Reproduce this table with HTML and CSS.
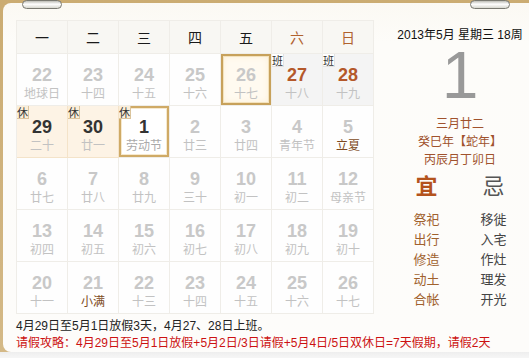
FILE: index.html
```html
<!DOCTYPE html>
<html lang="zh-CN">
<head>
<meta charset="utf-8">
<title>万年历</title>
<link rel="stylesheet" href="styles.css">
</head>
<body>
<div class="frame">
  <span class="ring ring-left"></span>
  <span class="ring ring-right"></span>
  <div class="main">
    <div class="cal">
      <div class="hd">一</div><div class="hd">二</div><div class="hd">三</div><div class="hd">四</div><div class="hd">五</div><div class="hd wk">六</div><div class="hd wk">日</div>

      <div class="day"><b>22</b><i>地球日</i></div>
      <div class="day"><b>23</b><i>十四</i></div>
      <div class="day"><b>24</b><i>十五</i></div>
      <div class="day"><b>25</b><i>十六</i></div>
      <div class="day sel"><b>26</b><i>十七</i></div>
      <div class="day work"><span class="tag">班</span><b>27</b><i>十八</i></div>
      <div class="day work"><span class="tag">班</span><b>28</b><i>十九</i></div>

      <div class="day rest"><span class="tag">休</span><b>29</b><i>二十</i></div>
      <div class="day rest"><span class="tag">休</span><b>30</b><i>廿一</i></div>
      <div class="day today"><span class="tag">休</span><b>1</b><i>劳动节</i></div>
      <div class="day"><b>2</b><i>廿三</i></div>
      <div class="day"><b>3</b><i>廿四</i></div>
      <div class="day"><b>4</b><i>青年节</i></div>
      <div class="day"><b>5</b><i class="term">立夏</i></div>

      <div class="day"><b>6</b><i>廿七</i></div>
      <div class="day"><b>7</b><i>廿八</i></div>
      <div class="day"><b>8</b><i>廿九</i></div>
      <div class="day"><b>9</b><i>三十</i></div>
      <div class="day"><b>10</b><i>初一</i></div>
      <div class="day"><b>11</b><i>初二</i></div>
      <div class="day"><b>12</b><i>母亲节</i></div>

      <div class="day"><b>13</b><i>初四</i></div>
      <div class="day"><b>14</b><i>初五</i></div>
      <div class="day"><b>15</b><i>初六</i></div>
      <div class="day"><b>16</b><i>初七</i></div>
      <div class="day"><b>17</b><i>初八</i></div>
      <div class="day"><b>18</b><i>初九</i></div>
      <div class="day"><b>19</b><i>初十</i></div>

      <div class="day"><b>20</b><i>十一</i></div>
      <div class="day"><b>21</b><i class="term">小满</i></div>
      <div class="day"><b>22</b><i>十三</i></div>
      <div class="day"><b>23</b><i>十四</i></div>
      <div class="day"><b>24</b><i>十五</i></div>
      <div class="day"><b>25</b><i>十六</i></div>
      <div class="day"><b>26</b><i>十七</i></div>
    </div>

    <div class="side">
      <div class="date">2013年5月 星期三 18周</div>
      <div class="big">1</div>
      <div class="lunar">
        <div>三月廿二</div>
        <div>癸巳年【蛇年】</div>
        <div>丙辰月丁卯日</div>
      </div>
      <div class="yj">
        <div class="col yi">
          <div class="title">宜</div>
          <div>祭祀</div><div>出行</div><div>修造</div><div>动土</div><div>合帐</div>
        </div>
        <div class="col ji">
          <div class="title">忌</div>
          <div>移徙</div><div>入宅</div><div>作灶</div><div>理发</div><div>开光</div>
        </div>
      </div>
    </div>
  </div>
  <div class="notes">
    <p>4月29日至5月1日放假3天，4月27、28日上班。</p>
    <p class="red">请假攻略：4月29日至5月1日放假+5月2日/3日请假+5月4日/5日双休日=7天假期，请假2天</p>
  </div>
</div>
</body>
</html>
```

FILE: styles.css
```css
html, body {
  margin: 0;
  padding: 0;
}
body {
  width: 529px;
  height: 358px;
  overflow: hidden;
  background: linear-gradient(to bottom, #cbac72 0, #d4b987 352px, #eeeeee 352px, #f6f6f6 358px);
  font-family: "Liberation Sans", "Noto Sans CJK SC", sans-serif;
  color: #222;
}
.frame {
  position: relative;
  margin: 3px 0 0 3px;
  height: 349px;
  box-sizing: border-box;
  padding: 17px 0 0 13px;
  background: linear-gradient(to bottom, #fbf9f3 0, #fdfcf9 40px, #fdfcfa 100%);
  border-top-left-radius: 8px;
  border-bottom-left-radius: 8px;
}
.ring {
  position: absolute;
  top: -3px;
  width: 40px;
  height: 9px;
  box-sizing: border-box;
  border: 1px solid #7a7a72;
  border-radius: 5px;
  background: linear-gradient(to bottom, #bdbdb5 0, #ffffff 45%, #d8d8d0 100%);
}
.ring-left { left: 19px; }
.ring-right { left: 467px; }

.main {
  display: flex;
  align-items: flex-start;
}
.cal {
  display: grid;
  grid-template-columns: repeat(7, 51px);
  grid-template-rows: 33px repeat(5, 52px);
  border-left: 1px solid #efede8;
  border-top: 1px solid #efede8;
}
.hd, .day {
  box-sizing: border-box;
  border-right: 1px solid #efede8;
  border-bottom: 1px solid #efede8;
}
.hd {
  background: #f8f7f3;
  font-family: "Noto Sans CJK SC", sans-serif;
  font-size: 14px;
  line-height: 32px;
  text-align: center;
  color: #1a1a1a;
}
.hd.wk { color: #b0622f; }

.day {
  position: relative;
  background: #fefefe;
  text-align: center;
  padding-top: 11px;
}
.day b {
  display: block;
  font-family: "Liberation Sans", sans-serif;
  font-weight: bold;
  font-size: 18px;
  line-height: 20px;
  color: #c8c8c8;
}
.day i {
  display: block;
  font-style: normal;
  font-family: "Noto Sans CJK SC", sans-serif;
  font-size: 12px;
  line-height: 16px;
  color: #c2c2c2;
}
.day i.term { color: #7d4a22; }

.tag {
  position: absolute;
  top: 0;
  left: 0;
  width: 12px;
  height: 13px;
  font-family: "Noto Sans CJK SC", sans-serif;
  font-size: 11px;
  line-height: 12px;
  text-align: center;
  color: #333;
  box-sizing: border-box;
}
.work { background: #f4f4f4; }
.work b { color: #b4582a; }
.work .tag {
  background: #ffffff;
  border-right: 1px solid #e2e2e2;
  border-bottom: 1px solid #e2e2e2;
}
.rest {
  background: #fdf3e5;
  border-right-color: #f4e3c9;
  border-bottom-color: #f4e3c9;
}
.rest b, .today b { color: #333333; }
.rest .tag, .today .tag {
  background: #fbeed8;
  border-right: 1px solid #dcc49c;
  border-bottom: 1px solid #dcc49c;
}
.today {
  background: #ffffff;
  box-shadow: inset 0 0 0 2px #cfaa66, inset 0 0 0 3px #f6e9cf;
}
.today i { color: #aaaaaa; }
.sel {
  background: #fffaf0;
  box-shadow: inset 0 0 0 2px #c7a15b, inset 0 0 0 3px #f3e2bd, inset 0 0 8px #f7e6c2;
}

.side {
  width: 155px;
  box-sizing: border-box;
  padding-left: 17px;
  text-align: center;
}
.date {
  margin-top: 8px;
  font-size: 12px;
  line-height: 14px;
  color: #111;
  white-space: nowrap;
}
.big {
  font-family: "Liberation Sans", sans-serif;
  font-size: 66px;
  line-height: 66px;
  color: #999999;
}
.lunar {
  margin-top: 6px;
  font-family: "Noto Sans CJK SC", sans-serif;
  font-size: 12px;
  line-height: 18px;
  color: #a0522d;
}
.yj {
  display: grid;
  grid-template-columns: 67px 67px;
  justify-content: center;
}
.col {
  font-family: "Noto Sans CJK SC", sans-serif;
  font-size: 13px;
  line-height: 20px;
}
.col .title {
  font-size: 22px;
  line-height: 32px;
  margin-bottom: 9px;
}
.yi { color: #a0612d; }
.yi .title { color: #b4531d; font-weight: bold; }
.ji { color: #444444; }
.ji .title { color: #555555; }

.notes {
  margin-top: 4px;
  margin-left: 0;
}
.notes p {
  margin: 0;
  font-size: 12px;
  line-height: 17px;
  color: #222;
  white-space: nowrap;
}
.notes p.red { color: #cc1111; }
```
